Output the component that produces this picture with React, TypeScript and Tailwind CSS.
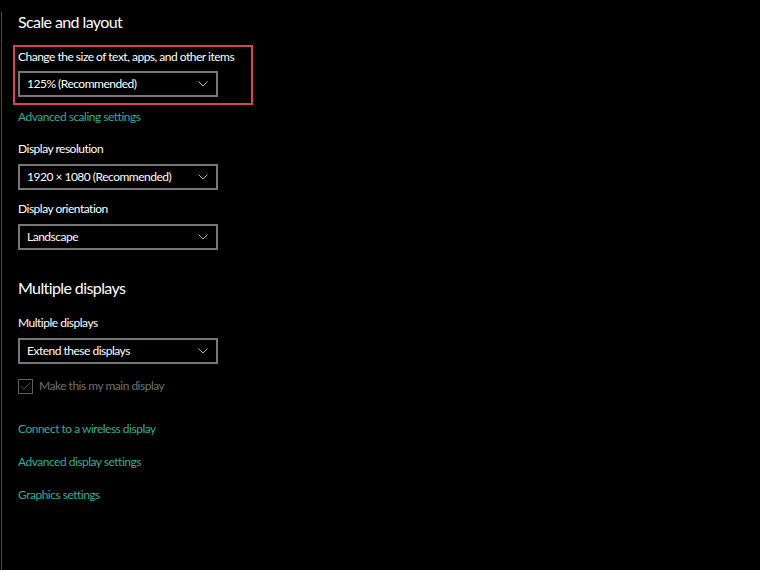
import { Check } from 'lucide-react'

const font = { fontFamily: 'Lato, "Open Sans", sans-serif' }

function Chevron() {
  return (
    <svg width="10" height="6" viewBox="0 0 10 6" fill="none" className="mr-[2px] shrink-0">
      <path d="M0.5 0.5 L5 5 L9.5 0.5" stroke="#b4b4b4" strokeWidth="1" />
    </svg>
  )
}

function Select({ value, className = '' }: { value: string; className?: string }) {
  return (
    <div
      className={`flex h-[26px] w-[200px] items-center justify-between border-2 border-[#777777] pl-[7px] pr-[6px] text-[12px] tracking-[-0.5px] text-white ${className}`}
    >
      <span className="whitespace-nowrap leading-none">{value}</span>
      <Chevron />
    </div>
  )
}

function Label({ children, className = '' }: { children: React.ReactNode; className?: string }) {
  return (
    <div className={`h-[16px] whitespace-nowrap text-[12px] leading-[16px] tracking-[-0.5px] text-white ${className}`}>
      {children}
    </div>
  )
}

function Link({ children, className = '' }: { children: React.ReactNode; className?: string }) {
  return (
    <div
      className={`h-[16px] whitespace-nowrap text-[12px] leading-[16px] tracking-[-0.5px] text-[#2fae96] ${className}`}
    >
      {children}
    </div>
  )
}

export default function App() {
  return (
    <div className="h-[570px] w-[760px] overflow-hidden bg-black" style={font}>
      <div className="ml-px h-full border-l border-[#4a4a4a] pl-[16px]">
        <h2 className="mt-[12px] h-[20px] whitespace-nowrap text-[16px] leading-[20px] tracking-[-0.6px] text-white">
          Scale and layout
        </h2>

        <div className="-ml-[5px] mt-[13px] w-[240px] border-2 border-[#d9434f] pb-[6px] pl-[3px] pt-[2px]">
          <Label>Change the size of text, apps, and other items</Label>
          <Select value="125% (Recommended)" className="mt-[6px]" />
        </div>

        <Link className="mt-[4px]">Advanced scaling settings</Link>

        <Label className="mt-[16px]">Display resolution</Label>
        <Select value="1920 × 1080 (Recommended)" className="mt-[7px]" />

        <Label className="mt-[11px]">Display orientation</Label>
        <Select value="Landscape" className="mt-[7px]" />

        <h2 className="mt-[28px] h-[20px] whitespace-nowrap text-[16px] leading-[20px] tracking-[-0.6px] text-white">
          Multiple displays
        </h2>

        <Label className="mt-[17px]">Multiple displays</Label>
        <Select value="Extend these displays" className="mt-[7px]" />

        <div className="mt-[14px] flex h-[16px] items-center gap-[6px]">
          <div className="flex h-[15px] w-[15px] items-center justify-center border-[1.5px] border-[#5f5f5f]">
            <Check size={13} strokeWidth={1.6} color="#6c6c6c" />
          </div>
          <span className="whitespace-nowrap text-[12px] leading-[16px] tracking-[-0.5px] text-[#6f6f6f]">
            Make this my main display
          </span>
        </div>

        <Link className="mt-[27px]">Connect to a wireless display</Link>
        <Link className="mt-[17px]">Advanced display settings</Link>
        <Link className="mt-[17px]">Graphics settings</Link>
      </div>
    </div>
  )
}
